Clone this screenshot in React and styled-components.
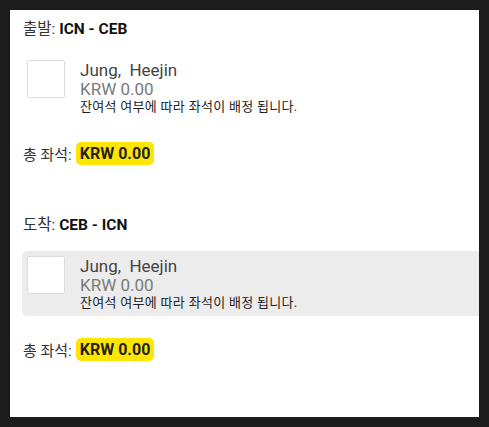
import styled, { createGlobalStyle } from "styled-components";

const GlobalStyle = createGlobalStyle`
  html, body {
    margin: 0;
    padding: 0;
    background: #1c1c1c;
  }
  body {
    font-family: Roboto, "Noto Sans CJK KR", sans-serif;
  }
`;

const Frame = styled.div`
  padding: 10px;
  width: 489px;
  height: 427px;
  box-sizing: border-box;
`;

const Panel = styled.div`
  background: #fff;
  height: 100%;
  overflow: hidden;
  padding: 9px 0 0 12px;
  box-sizing: border-box;
  display: flex;
  flex-direction: column;
  gap: 50px;
`;

const Section = styled.section`
  display: flex;
  flex-direction: column;
`;

const Title = styled.div`
  font-size: 15.5px;
  line-height: 20px;
  color: #333;
  padding-left: 1px;

  b {
    color: #111;
    font-weight: 700;
  }
`;

const Card = styled.div`
  margin-top: 16px;
  display: flex;
  align-items: flex-start;
  gap: 15px;
  padding: 5px;
  border-radius: 5px 0 0 5px;
  background: ${(p) => (p.$selected ? "#ececec" : "transparent")};
`;

const Box = styled.div`
  width: 38px;
  height: 38px;
  flex-shrink: 0;
  box-sizing: border-box;
  background: #fff;
  border: 1px solid #dcdcdc;
  border-radius: 2px;
`;

const Info = styled.div`
  display: flex;
  flex-direction: column;
`;

const Name = styled.div`
  font-size: 17px;
  line-height: 20px;
  color: #444;
  white-space: pre;
`;

const Price = styled.div`
  font-size: 17px;
  line-height: 19px;
  color: #7a7a7a;
`;

const Note = styled.div`
  font-size: 13px;
  line-height: 16px;
  letter-spacing: 0.3px;
  color: #222;
`;

const Total = styled.div`
  margin-top: 22px;
  display: flex;
  align-items: center;
  gap: 4px;
  font-size: 15px;
  color: #333;
  padding-left: 1px;
`;

const Badge = styled.span`
  display: inline-flex;
  align-items: center;
  height: 23px;
  padding: 0 4px;
  border-radius: 5px;
  background: #ffe600;
  color: #222;
  font-weight: 700;
  font-size: 16px;
`;

const legs = [
  { label: "출발", route: "ICN - CEB", selected: false },
  { label: "도착", route: "CEB - ICN", selected: true },
];

export default function App() {
  return (
    <>
      <GlobalStyle />
      <Frame>
        <Panel>
          {legs.map((leg) => (
            <Section key={leg.label}>
              <Title>
                {leg.label}: <b>{leg.route}</b>
              </Title>
              <Card $selected={leg.selected}>
                <Box />
                <Info>
                  <Name>{"Jung,  Heejin"}</Name>
                  <Price>KRW 0.00</Price>
                  <Note>잔여석 여부에 따라 좌석이 배정 됩니다.</Note>
                </Info>
              </Card>
              <Total>
                총 좌석: <Badge>KRW 0.00</Badge>
              </Total>
            </Section>
          ))}
        </Panel>
      </Frame>
    </>
  );
}
